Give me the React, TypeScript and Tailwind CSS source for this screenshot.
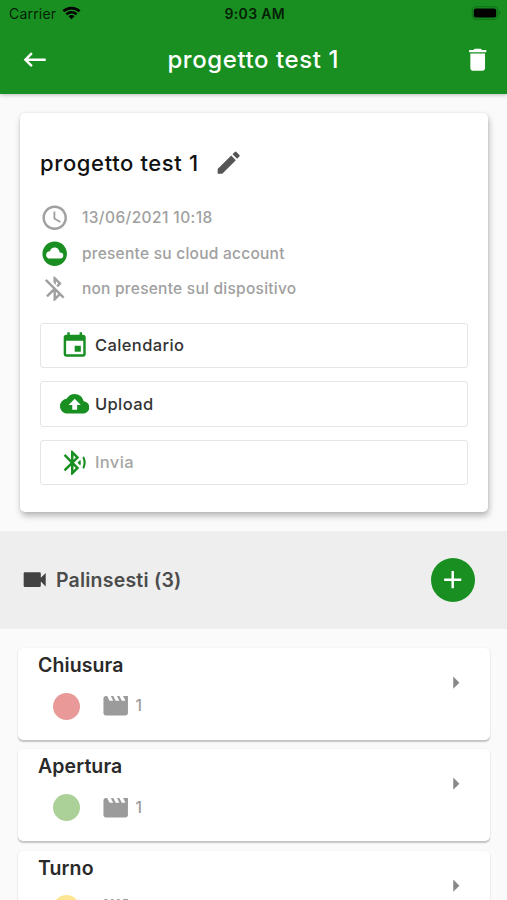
import type { ReactNode } from "react";
import {
  MdAccessTime,
  MdAdd,
  MdArrowRight,
  MdBluetoothDisabled,
  MdBluetoothSearching,
  MdCloudCircle,
  MdCloudUpload,
  MdDelete,
  MdEdit,
  MdEvent,
  MdKeyboardBackspace,
  MdMovie,
  MdVideocam,
} from "react-icons/md";

const GREEN = "text-[#188f20]";

function StatusBar() {
  return (
    <div className="grid h-[27px] grid-cols-3 items-center pl-[9px] pr-[5.5px] text-black/80">
      <div className="flex items-center gap-[6px]">
        <span className="text-[14px] tracking-[0.2px]">Carrier</span>
        <svg width="19" height="14" viewBox="0 0 20 14" className="-mt-[2px] text-black">
          <path d="M1.5 5.2a12.2 12.2 0 0 1 17 0" fill="none" stroke="currentColor" strokeWidth="2.9" />
          <path d="M4.6 8.4a7.8 7.8 0 0 1 10.8 0" fill="none" stroke="currentColor" strokeWidth="2.5" />
          <path d="M10 13.6 6.9 10.4a4.3 4.3 0 0 1 6.2 0z" fill="currentColor" />
        </svg>
      </div>
      <span className="-ml-[1px] text-center text-[14px] font-semibold tracking-[0.35px]">9:03 AM</span>
      <svg width="31" height="14" viewBox="0 0 31 14" className="-mt-[1px] justify-self-end">
        <rect x="1.3" y="0.8" width="25.4" height="12.4" rx="3.6" fill="none" stroke="#117019" strokeWidth="1.1" />
        <rect x="2.8" y="2.4" width="22.4" height="9.2" rx="2" fill="#000" />
        <path d="M28.3 4.8c1.6.6 1.6 3.8 0 4.4z" fill="#117019" />
      </svg>
    </div>
  );
}

function InfoRow({ icon, children, className = "tracking-[0.25px]" }: { icon: ReactNode; children: string; className?: string }) {
  return (
    <div className="flex h-[35.5px] items-center gap-[13px] text-[15.5px] font-medium text-[#a0a0a0]">
      {icon}
      <span className={className}>{children}</span>
    </div>
  );
}

function ActionButton({ icon, label, disabled }: { icon: ReactNode; label: string; disabled?: boolean }) {
  return (
    <button
      className={`flex h-[45.5px] w-full items-center gap-[6px] rounded-[3px] border border-[#e5e5e5] pl-[19px] text-[16.5px] font-medium tracking-[0.4px] ${
        disabled ? "text-[#a6a6a6]" : "text-[#333]"
      }`}
    >
      <span className={GREEN}>{icon}</span>
      <span className="pt-px">{label}</span>
    </button>
  );
}

function ScheduleCard({ name, dot }: { name: string; dot: string }) {
  return (
    <div className="flex h-[92px] shrink-0 justify-between rounded-[5px] bg-white pl-5 pr-5 shadow-[0_1.5px_1.5px_rgba(0,0,0,0.22),0_0_2px_rgba(0,0,0,0.05)]">
      <div>
        <div className="pt-[4px] text-[19.5px] leading-[26px] font-semibold tracking-[0.1px] text-[#2a2a2a]">{name}</div>
        <div className="mt-[13px] flex h-[30px] items-center pl-[15px] text-[#9b9b9b]">
          <div className={`size-[27px] rounded-full ${dot}`} />
          <MdMovie size={29.4} className="ml-[20.5px]" />
          <span className="ml-[5.5px] text-[15.5px] leading-none font-medium">1</span>
        </div>
      </div>
      <MdArrowRight size={29.4} className="mt-[20px] text-[#888]" />
    </div>
  );
}

export default function App() {
  return (
    <div className="flex h-[900px] w-[507px] flex-col overflow-hidden bg-[#fafafa] font-[Inter,sans-serif]">
      <header className="z-10 h-[94px] shrink-0 bg-[#188f20] shadow-[0_1px_4px_rgba(0,0,0,0.25)]">
        <StatusBar />
        <div className="flex h-[66px] items-center justify-between pl-[20px] pr-[14.5px] text-white">
          <MdKeyboardBackspace size={29.4} />
          <h1 className="-ml-[6px] text-[24px] font-medium tracking-[0.58px]">progetto test 1</h1>
          <MdDelete size={29.4} />
        </div>
      </header>

      <section className="mr-[19px] ml-[20px] mt-[19px] h-[399px] shrink-0 rounded-[5px] bg-white pr-[20px] pl-[19.5px] pt-[31.5px] shadow-[1px_4px_6px_rgba(0,0,0,0.26),0_0_3px_rgba(0,0,0,0.08)]">
        <div className="flex h-[36px] items-center gap-[15.5px]">
          <h2 className="ml-[0.5px] pt-px text-[22px] font-medium tracking-[0.62px] text-[#111]">progetto test 1</h2>
          <MdEdit size={29.4} className="text-[#555]" />
        </div>
        <div className="mt-[19.5px]">
          <InfoRow icon={<MdAccessTime size={29.4} />} className="tracking-[0.4px]">
            13/06/2021 10:18
          </InfoRow>
          <InfoRow icon={<MdCloudCircle size={29.4} className={GREEN} />}>presente su cloud account</InfoRow>
          <InfoRow icon={<MdBluetoothDisabled size={29.4} />}>non presente sul dispositivo</InfoRow>
        </div>
        <div className="mt-[16px] flex flex-col gap-[13px]">
          <ActionButton icon={<MdEvent size={29.4} />} label="Calendario" />
          <ActionButton icon={<MdCloudUpload size={29.4} />} label="Upload" />
          <ActionButton icon={<MdBluetoothSearching size={29.4} />} label="Invia" disabled />
        </div>
      </section>

      <div className="mt-[19px] flex h-[98px] shrink-0 items-center bg-[#eee] pl-[20px] pr-[32px] text-[#424242]">
        <MdVideocam size={29.4} />
        <span className="ml-[6.5px] pt-px text-[19.5px] font-semibold tracking-[0.22px] text-[#4c4c4c]">Palinsesti (3)</span>
        <button className="ml-auto flex size-[44px] items-center justify-center rounded-full bg-[#188f20] text-white">
          <MdAdd size={29.4} />
        </button>
      </div>

      <div className="mt-[19px] flex flex-col gap-[9.3px] pl-[18px] pr-[17px]">
        <ScheduleCard name="Chiusura" dot="bg-[#e99a98]" />
        <ScheduleCard name="Apertura" dot="bg-[#abd198]" />
        <ScheduleCard name="Turno" dot="bg-[#fce694]" />
      </div>
    </div>
  );
}
